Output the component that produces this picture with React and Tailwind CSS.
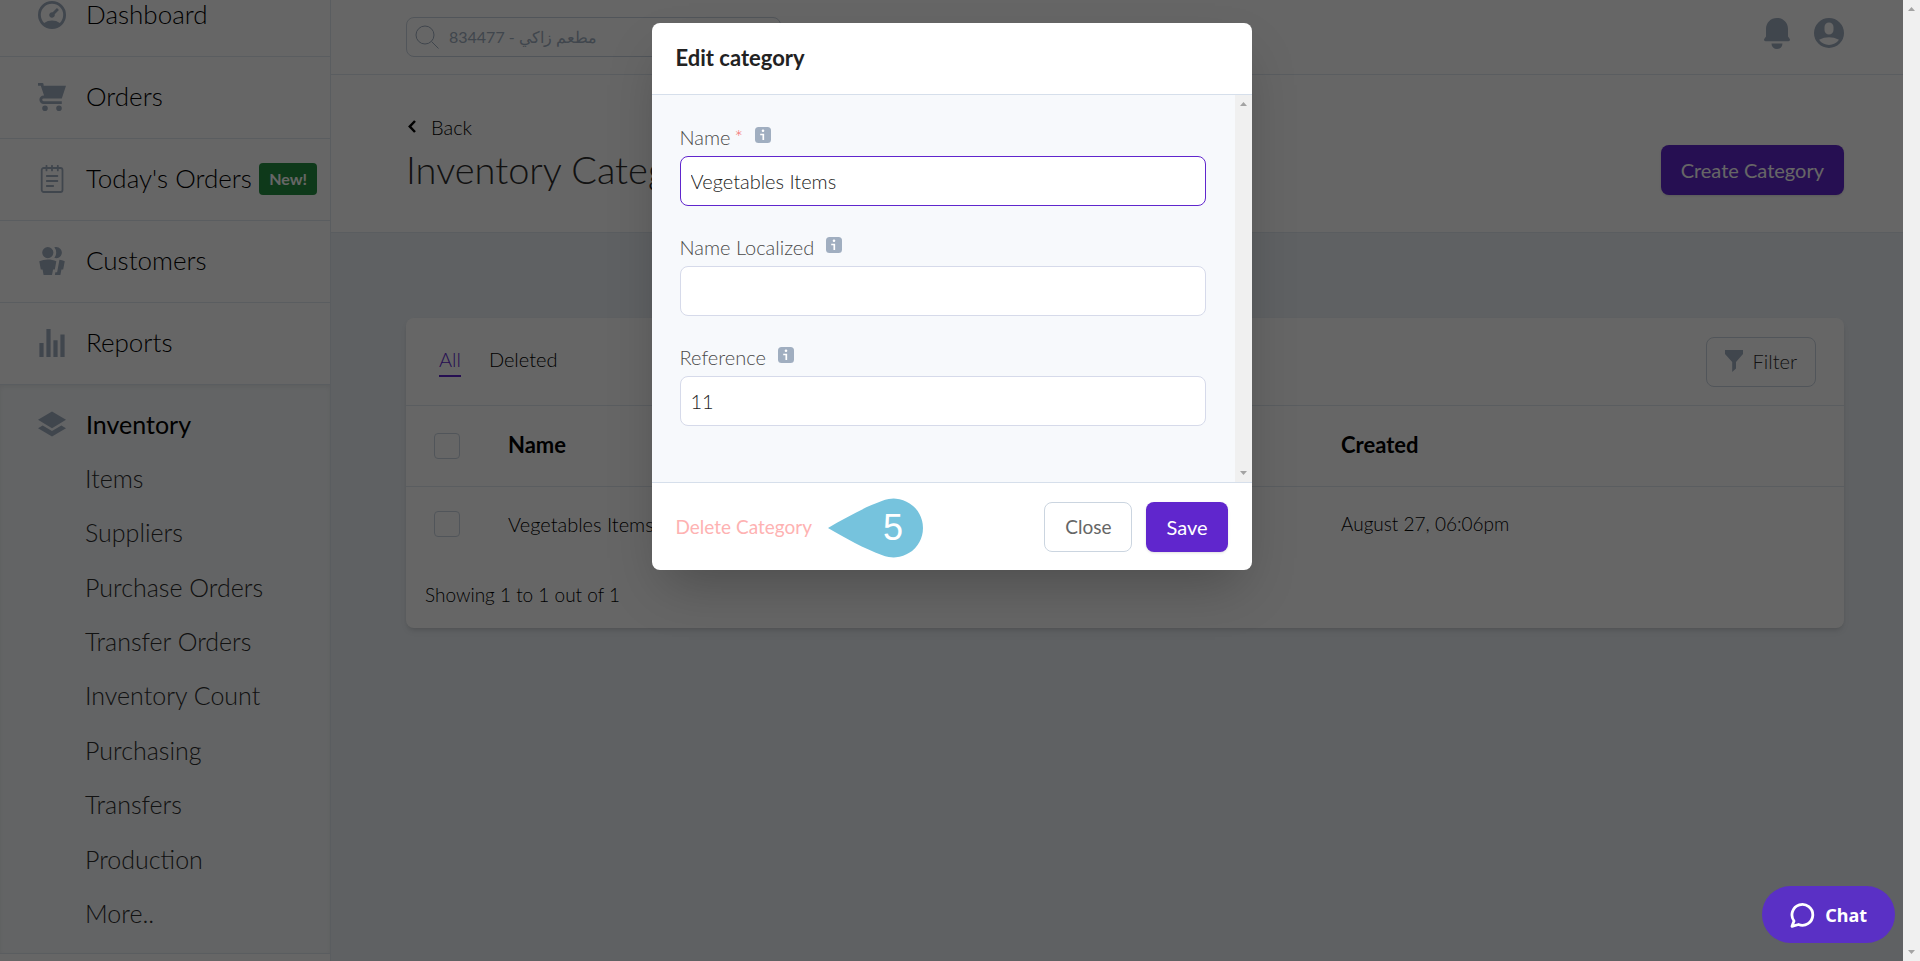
import { useState } from "react";

// Sidebar entries that sit above the expanded Inventory section
const MENU = [
  { label: "Dashboard", icon: DashboardIcon },
  { label: "Orders", icon: CartIcon },
  { label: "Today's Orders", icon: NotesIcon, badge: "New!" },
  { label: "Customers", icon: CustomersIcon },
  { label: "Reports", icon: ReportsIcon },
];

const INVENTORY_LINKS = [
  "Items",
  "Suppliers",
  "Purchase Orders",
  "Transfer Orders",
  "Inventory Count",
  "Purchasing",
  "Transfers",
  "Production",
  "More..",
];

/* ---------- Icons ---------- */

function DashboardIcon() {
  return (
    <svg className="w-7 h-7" viewBox="0 0 20 20" fill="currentColor">
      <path d="M10 20a10 10 0 1 1 0-20 10 10 0 0 1 0 20zm-5.6-4.29a9.95 9.95 0 0 1 11.2 0 8 8 0 1 0-11.2 0zm6.12-7.64l3.02-3.02 1.41 1.41-3.02 3.02a2 2 0 1 1-1.41-1.41z" />
    </svg>
  );
}

function CartIcon() {
  return (
    <svg className="w-7 h-7" viewBox="0 0 20 20" fill="currentColor">
      <path d="M4 2h16l-3 9H4a1 1 0 1 0 0 2h13v2H4a3 3 0 0 1 0-6h.33L3 5 2 2H0V0h3a1 1 0 0 1 1 1v1zm1 18a2 2 0 1 1 0-4 2 2 0 0 1 0 4zm10 0a2 2 0 1 1 0-4 2 2 0 0 1 0 4z" />
    </svg>
  );
}

function NotesIcon() {
  return (
    <svg
      className="w-7 h-7"
      viewBox="0 0 28 28"
      fill="none"
      stroke="currentColor"
      strokeWidth="1.8"
      strokeLinecap="round"
    >
      <rect x="3.7" y="3" width="20.8" height="24" rx="2" />
      <path d="M8.5 0.8v4.6M14 0.8v4.6M19.8 0.8v4.6M8.8 11h10.6M8.8 16h10.6M8.8 21h6.4" />
    </svg>
  );
}

function CustomersIcon() {
  return (
    <svg className="w-7 h-7" viewBox="0 0 20 20" fill="currentColor">
      <path d="M7 8a4 4 0 1 1 0-8 4 4 0 0 1 0 8zm0 1c2.15 0 4.2.4 6.1 1.09L12 16h-1.25L10 20H4l-.75-4H2L.9 10.09A17.93 17.93 0 0 1 7 9zm8.31.17c1.32.18 2.59.48 3.8.92L18 16h-1.25L16 20h-3.96l.37-2h1.25l1.65-8.83zM13 0a4 4 0 1 1-1.33 7.76 5.96 5.96 0 0 0 0-7.52C12.1.1 12.53 0 13 0z" />
    </svg>
  );
}

function ReportsIcon() {
  return (
    <svg className="w-7 h-7" viewBox="0 0 20 20" fill="currentColor">
      <path d="M1 10h3v10H1V10zM6 0h3v20H6V0zm5 8h3v12h-3V8zm5-4h3v16h-3V4z" />
    </svg>
  );
}

function LayersIcon() {
  return (
    <svg className="w-7 h-7" viewBox="0 0 20 20" fill="currentColor">
      <path d="M10 1l10 6-10 6L0 7l10-6zm6.67 10L20 13l-10 6-10-6 3.33-2L10 15l6.67-4z" />
    </svg>
  );
}

function SearchIcon() {
  return (
    <svg
      className="w-6 h-6 shrink-0"
      viewBox="0 0 24 24"
      fill="none"
      stroke="currentColor"
      strokeWidth="1"
    >
      <circle cx="10" cy="10" r="9" />
      <path d="M16.5 16.5l7 7" />
    </svg>
  );
}

function BellIcon() {
  return (
    <svg className="w-[26px] h-8" viewBox="0 0 26 32" fill="currentColor">
      <path d="M13 0C6.5 0 2 4.8 2 11v7.6L.4 20.8C-.4 22 .2 23.2 1.6 23.2h22.8c1.4 0 2-1.2 1.2-2.4L24 18.6V11C24 4.8 19.5 0 13 0z" />
      <path d="M7.5 25.5h11a5.5 5.5 0 0 1-11 0z" />
    </svg>
  );
}

function UserIcon() {
  return (
    <svg className="w-[30px] h-[30px]" viewBox="0 0 20 20" fill="currentColor">
      <path d="M10 20a10 10 0 1 1 0-20 10 10 0 0 1 0 20zM7 6v2a3 3 0 1 0 6 0V6a3 3 0 1 0-6 0zm-3.65 8.44a8 8 0 0 0 13.3 0 15.94 15.94 0 0 0-13.3 0z" />
    </svg>
  );
}

function FilterIcon() {
  return (
    <svg className="w-[18px] h-[22px]" viewBox="0 0 18 22" fill="currentColor">
      <path d="M0 0h18v4l-7 8v6.5L7.2 22V12L0 4z" />
    </svg>
  );
}

function InfoIcon() {
  return (
    <svg className="w-4 h-4" viewBox="0 0 16 16">
      <rect width="16" height="16" rx="3.5" fill="#a0aec0" />
      <circle cx="8" cy="3.8" r="1.3" fill="#fff" />
      <path d="M5.2 7.5H8.3V13" fill="none" stroke="#fff" strokeWidth="1.7" />
    </svg>
  );
}

function ChatIcon() {
  return (
    <svg
      className="w-[25px] h-[26px]"
      viewBox="0 0 25 26"
      fill="none"
      stroke="currentColor"
      strokeWidth="2.8"
      strokeLinejoin="round"
    >
      <path d="M2 24.3l2-5.3A10.4 10.4 0 1 1 8.5 22.5z" />
    </svg>
  );
}

/* ---------- Scrollbar ---------- */

function Scrollbar() {
  return (
    <div className="w-[17px] shrink-0 bg-[#f0f0f0] flex flex-col items-center justify-between py-[7px]">
      <svg className="w-[7px] h-1" viewBox="0 0 7 4" fill="#a3a3a3">
        <path d="M0 4L3.5 0 7 4z" />
      </svg>
      <svg className="w-[7px] h-1" viewBox="0 0 7 4" fill="#a3a3a3">
        <path d="M0 0h7L3.5 4z" />
      </svg>
    </div>
  );
}

/* ---------- Sidebar ---------- */

function Sidebar() {
  return (
    <aside className="w-[331px] shrink-0 bg-white border-r border-[#e2e8f0] overflow-hidden">
      {/* The menu is scrolled down a little */}
      <nav className="-mt-[25px] text-[25px] text-black">
        {MENU.map(({ label, icon: Icon, badge }) => (
          <a
            key={label}
            href="#"
            className="flex items-center h-[82px] pl-[38px] pb-[2px] border-b border-[#e2e8f0] text-[26px] font-light"
          >
            <span className="text-[#a0aec0]">
              <Icon />
            </span>
            <span className="ml-5 whitespace-nowrap">{label}</span>
            {badge && (
              <span className="ml-auto mr-[13px] h-8 px-[10px] flex items-center rounded bg-[#259041] text-white text-base font-bold">
                {badge}
              </span>
            )}
          </a>
        ))}

        <div className="bg-[#f7fafc] border-b border-[#e2e8f0] shadow-[inset_0_2px_4px_rgba(0,0,0,0.06)] pb-3">
          <a href="#" className="flex items-center h-20 pl-[38px] pb-[2px]">
            <span className="text-[#a0aec0]">
              <LayersIcon />
            </span>
            <span className="ml-5">Inventory</span>
          </a>
          <ul className="-mt-[14px] h-[490px] grid font-light text-[#2d2d2d]">
            {INVENTORY_LINKS.map((label) => (
              <li key={label} className="flex items-center">
                <a href="#" className="pl-[85px]">
                  {label}
                </a>
              </li>
            ))}
          </ul>
        </div>
      </nav>
    </aside>
  );
}

/* ---------- Page behind the dialog ---------- */

function Topbar() {
  return (
    <header className="h-[75px] shrink-0 flex items-center justify-between bg-white border-b border-[#e2e8f0] pl-[75px] pr-[59px]">
      <label className="w-[375px] h-10 flex items-center gap-[10px] px-2 border border-[#cbd5e0] rounded-lg text-[#a0aec0]">
        <SearchIcon />
        <input
          aria-label="Search business"
          className="w-full bg-transparent outline-none text-base placeholder:text-[#a0aec0]"
          placeholder="834477 - مطعم زاكي"
        />
      </label>
      <div className="flex items-start gap-6 pb-[6px] text-[#a0aec0]">
        <button aria-label="Notifications">
          <BellIcon />
        </button>
        <button aria-label="Account">
          <UserIcon />
        </button>
      </div>
    </header>
  );
}

function PageHeading() {
  return (
    <section className="h-[158px] shrink-0 flex items-center justify-between bg-white border-b border-[#e2e8f0] pl-[75px] pr-[59px]">
      <div>
        <a href="#" className="flex items-center gap-[15px] pl-[2px] h-7 text-black">
          <svg
            className="w-2 h-[13px]"
            viewBox="0 0 8 13"
            fill="none"
            stroke="currentColor"
            strokeWidth="2.5"
          >
            <path d="M7 1L1.8 6.5 7 12" />
          </svg>
          <span className="font-light">Back</span>
        </a>
        <h1 className="mt-1 mb-[2px] text-[38px] leading-[48px] font-light text-[#2d2d2d]">
          Inventory Categories
        </h1>
      </div>
      <button className="h-[50px] px-5 mt-8 rounded-lg bg-[#6026cd] text-white shadow">
        Create Category
      </button>
    </section>
  );
}

function CategoriesCard() {
  return (
    <div className="bg-white rounded-lg shadow-md font-light">
      <div className="h-[88px] flex items-center justify-between pl-[33px] pr-7 border-b border-[#e2e8f0]">
        <div className="flex gap-7 leading-6">
          <button className="pb-1 border-b-2 border-[#6026cd] text-[#6026cd]">All</button>
          <button className="pb-1 border-b-2 border-transparent text-black">Deleted</button>
        </div>
        <button className="h-[50px] px-[18px] pb-[2px] flex items-center gap-[10px] border border-[#cbd5e0] rounded-lg text-[#2d2d2d]">
          <span className="text-[#a0aec0]">
            <FilterIcon />
          </span>
          Filter
        </button>
      </div>

      <table className="w-full table-fixed text-left">
        <thead>
          <tr className="h-20 border-b border-[#e2e8f0] text-[22px] text-black">
            <th className="w-[102px] pl-7">
              <input
                type="checkbox"
                aria-label="Select all"
                className="block appearance-none w-[26px] h-[26px] border border-[#cbd5e0] rounded"
              />
            </th>
            <th className="w-[833px] font-bold">Name</th>
            <th className="font-bold">Created</th>
          </tr>
        </thead>
        <tbody>
          <tr className="h-[76px] text-black">
            <td className="pl-7">
              <input
                type="checkbox"
                aria-label="Select Vegetables Items"
                className="block appearance-none w-[26px] h-[26px] border border-[#cbd5e0] rounded"
              />
            </td>
            <td>Vegetables Items</td>
            <td className="text-[19px]">August 27, 06:06pm</td>
          </tr>
        </tbody>
      </table>

      <p className="h-[66px] pt-5 pl-[19px] text-[19px] text-black">
        Showing 1 to 1 out of 1
      </p>
    </div>
  );
}

/* ---------- Edit dialog ---------- */

function Field({ id, label, required, value, onChange, active }) {
  return (
    <div className="mb-6">
      <div className="flex items-center h-9 pb-[2px] font-light text-[#4a4a4a]">
        <label htmlFor={id}>
          {label}
          {required && <span className="ml-1 text-[#f56565]">*</span>}
        </label>
        <span className="ml-3 pb-1">
          <InfoIcon />
        </span>
      </div>
      <input
        id={id}
        value={value}
        onChange={(e) => onChange(e.target.value)}
        className={`block w-full h-[50px] px-[10px] rounded-lg border bg-white font-light text-[#222222] outline-none ${
          active ? "border-[#6026cd]" : "border-[#d6daea]"
        }`}
      />
    </div>
  );
}

// Numbered marker that points at the delete link
function StepMarker({ number }) {
  return (
    <span className="ml-4 mt-[3px] relative w-[95px] h-[60px]">
      <svg className="w-full h-full" viewBox="0 0 95.4 60" fill="#76c3dd">
        <path d="M0 30C17 20 37 9 54 3A29.5 29.5 0 1 1 54 57C37 51 17 40 0 30z" />
      </svg>
      <span className="absolute inset-y-0 right-5 flex items-center font-['Liberation_Sans'] text-4xl text-white">
        {number}
      </span>
    </span>
  );
}

function EditCategoryDialog() {
  const [name, setName] = useState("Vegetables Items");
  const [localized, setLocalized] = useState("");
  const [reference, setReference] = useState("11");

  return (
    <div
      role="dialog"
      aria-labelledby="dialog-title"
      className="w-[600px] bg-white rounded-lg shadow-2xl overflow-hidden"
    >
      <div className="h-[72px] flex items-center px-6 border-b border-[#d6dfeb]">
        <h2 id="dialog-title" className="text-[22px] font-bold text-[#222222]">
          Edit category
        </h2>
      </div>

      <div className="flex bg-[#f7f9fc]">
        <form className="flex-1 pt-[25px] pb-8 pl-7 pr-[29px]">
          <Field id="name" label="Name" required value={name} onChange={setName} active />
          <Field
            id="localized"
            label="Name Localized"
            value={localized}
            onChange={setLocalized}
          />
          <Field id="reference" label="Reference" value={reference} onChange={setReference} />
        </form>
        <Scrollbar />
      </div>

      <div className="h-[88px] flex items-center px-6 border-t border-[#d6dfeb]">
        <button className="pt-[2px] text-[19px] text-[#feb2b2]">Delete Category</button>
        <StepMarker number={5} />
        <button className="ml-auto h-[50px] px-5 pt-[2px] border border-[#cbd5e0] rounded-lg text-[19px] text-[#666666]">
          Close
        </button>
        <button className="ml-[14px] h-[50px] px-5 rounded-lg bg-[#6026cd] text-white shadow">
          Save
        </button>
      </div>
    </div>
  );
}

export default function App() {
  return (
    <div className="h-screen flex overflow-hidden font-['Lato','Noto_Sans',sans-serif] text-xl">
      <div className="relative flex-1 flex min-w-0">
        <Sidebar />
        <main className="flex-1 min-w-0 flex flex-col bg-[#edf2f7]">
          <Topbar />
          <PageHeading />
          <div className="pt-[85px] pl-[75px] pr-[59px]">
            <CategoriesCard />
          </div>
        </main>

        {/* Dimmed backdrop with the dialog on top */}
        <div className="absolute inset-0 flex justify-center items-start pt-[23px] bg-black/60">
          <EditCategoryDialog />
        </div>

        <button className="absolute right-2 bottom-[18px] h-[57px] px-7 flex items-center gap-[10px] rounded-full bg-[#5a30c5] text-white text-lg font-['Noto_Sans'] font-bold">
          <ChatIcon />
          Chat
        </button>
      </div>
      <Scrollbar />
    </div>
  );
}
